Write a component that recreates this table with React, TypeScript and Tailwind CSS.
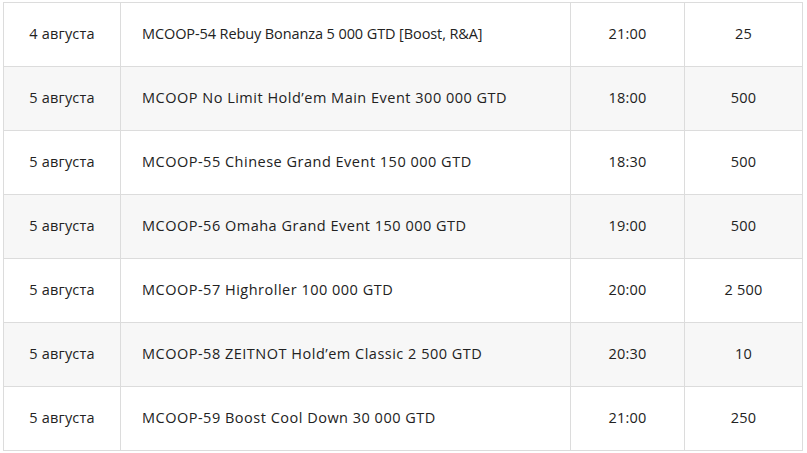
import React from 'react';

interface Row {
  date: string;
  name: string;
  time: string;
  buyin: string;
}

const rows: Row[] = [
  { date: '4 августа', name: 'MCOOP-54 Rebuy Bonanza 5 000 GTD [Boost, R&A]', time: '21:00', buyin: '25' },
  { date: '5 августа', name: 'MCOOP No Limit Hold’em Main Event 300 000 GTD', time: '18:00', buyin: '500' },
  { date: '5 августа', name: 'MCOOP-55 Chinese Grand Event 150 000 GTD', time: '18:30', buyin: '500' },
  { date: '5 августа', name: 'MCOOP-56 Omaha Grand Event 150 000 GTD', time: '19:00', buyin: '500' },
  { date: '5 августа', name: 'MCOOP-57 Highroller 100 000 GTD', time: '20:00', buyin: '2 500' },
  { date: '5 августа', name: 'MCOOP-58 ZEITNOT Hold’em Classic 2 500 GTD', time: '20:30', buyin: '10' },
  { date: '5 августа', name: 'MCOOP-59 Boost Cool Down 30 000 GTD', time: '21:00', buyin: '250' },
];

const App: React.FC = () => {
  return (
    <div className="w-[807px] h-[453px] bg-white pt-[2px] pl-[3px] overflow-hidden">
      <table
        className="w-[800px] border-collapse text-[14.5px] text-[#222] tracking-[0.2px]"
        style={{ fontFamily: '"Open Sans", Lato, sans-serif' }}
      >
        <tbody>
          {rows.map((r, i) => (
            <tr key={i} className={`h-[64px] ${i % 2 === 1 ? 'bg-[#f7f7f7]' : 'bg-white'}`}>
              <td className="w-[117px] border border-[#dcdcdc] text-center p-0 pb-[2px]">{r.date}</td>
              <td
                className={`w-[450px] border border-[#dcdcdc] p-0 pl-[21px] pb-[2px] ${
                  i === 0 ? 'tracking-[-0.1px]' : 'tracking-[0.5px]'
                }`}
              >
                {r.name}
              </td>
              <td className="w-[114px] border border-[#dcdcdc] text-center p-0 pb-[2px]">{r.time}</td>
              <td className="border border-[#dcdcdc] text-center p-0 pb-[2px]">{r.buyin}</td>
            </tr>
          ))}
        </tbody>
      </table>
    </div>
  );
};

export default App;
